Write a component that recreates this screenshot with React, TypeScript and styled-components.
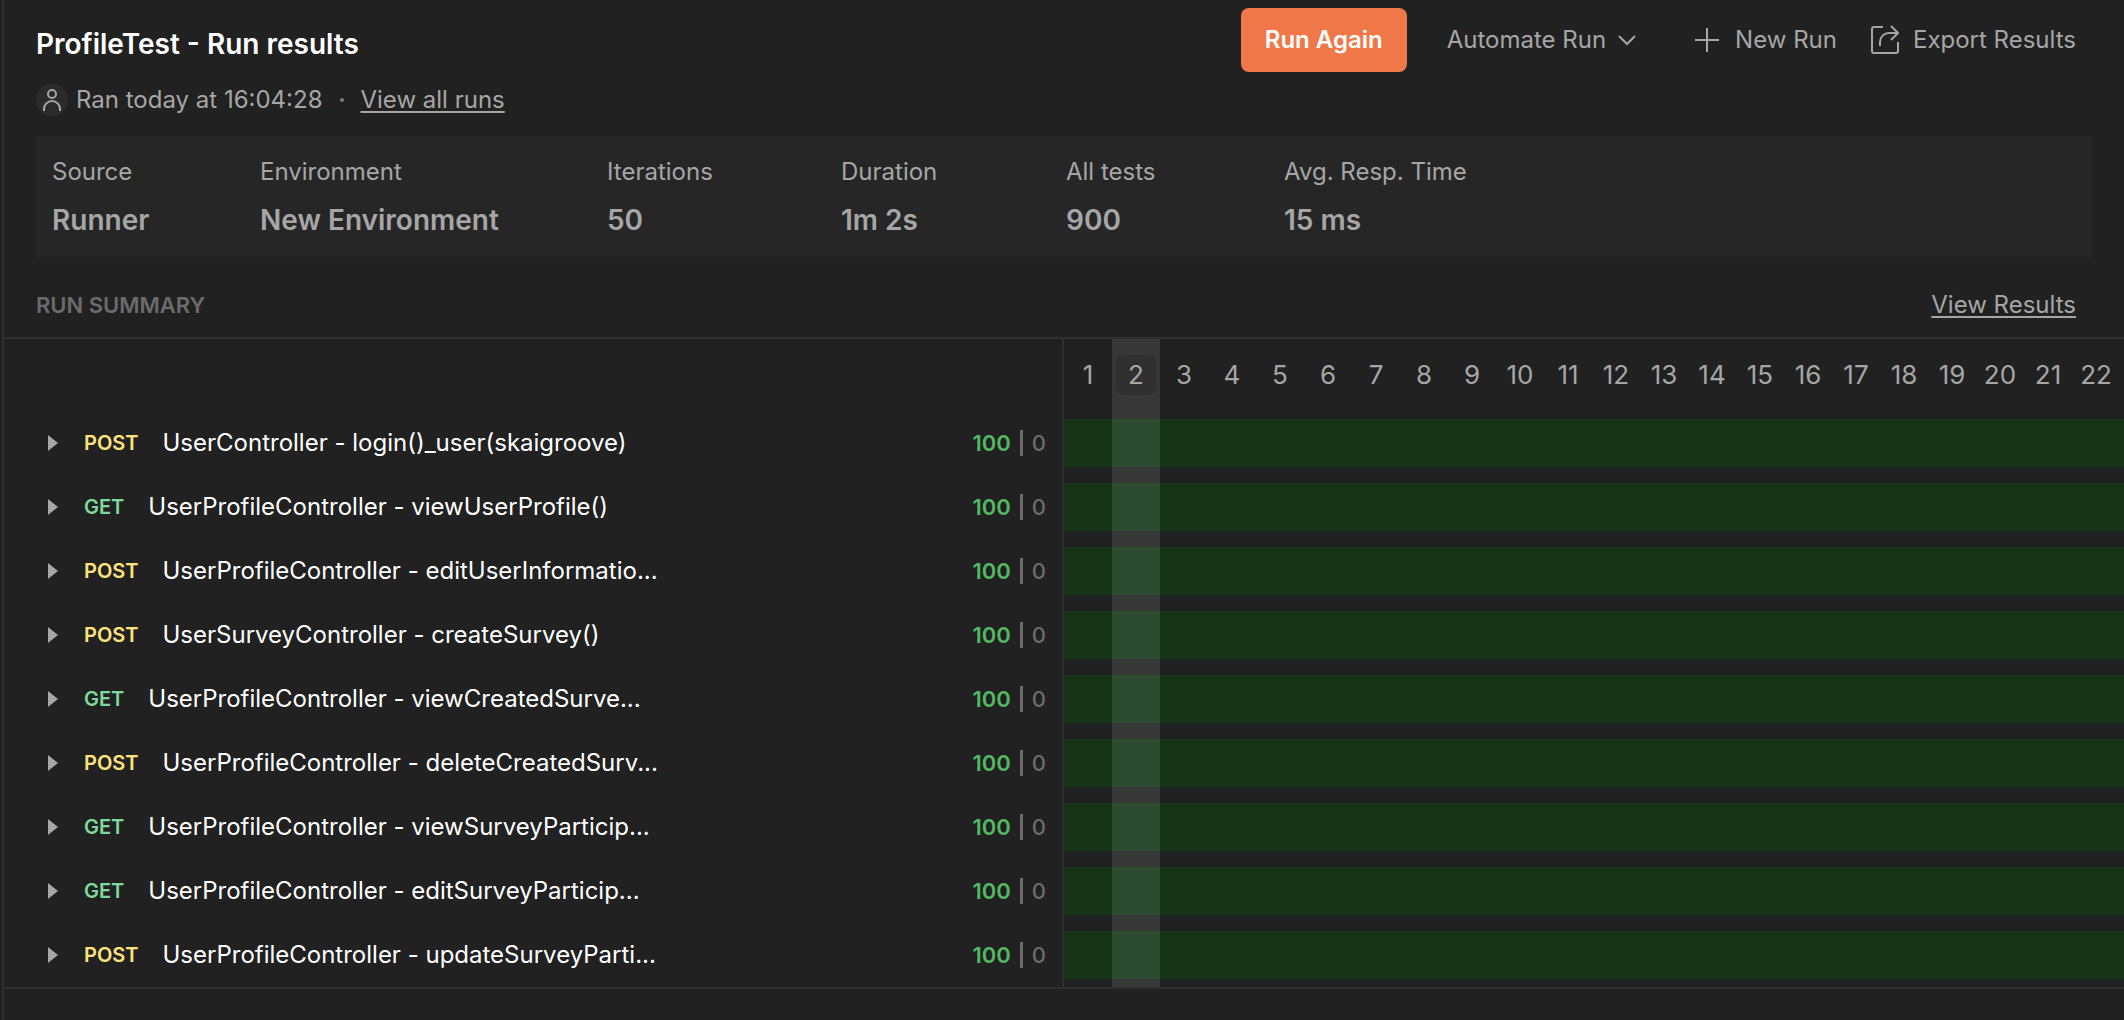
import React, { useState } from "react";
import styled, { createGlobalStyle } from "styled-components";

const font = `Inter, "Liberation Sans", sans-serif`;

const GlobalStyle = createGlobalStyle`
  *, *::before, *::after { box-sizing: border-box; }
  html, body, #root { min-height: 100%; }
  body {
    margin: 0;
    background: #212121;
    color: #a6a6a6;
    font-family: ${font};
    font-size: 24px;
    line-height: 32px;
    overflow-x: hidden;
  }
  button { font: inherit; color: inherit; background: none; border: 0; padding: 0; cursor: pointer; }
  a { color: inherit; }
  h1, h2, dl, dd, ol, ul { margin: 0; padding: 0; }
`;

const Page = styled.main`
  min-height: 100vh;
  margin-left: 2px;
  border-left: 2px solid #2f2f2f;
  overflow: hidden;
`;

const Header = styled.header`
  display: flex;
  justify-content: space-between;
  align-items: flex-start;
  padding: 8px 48px 0 32px;
`;

const Heading = styled.div`
  display: flex;
  flex-direction: column;
  gap: 20px;
  padding-top: 20px;
`;

const Title = styled.h1`
  font-size: 28px;
  font-weight: 600;
  line-height: 32px;
  color: #ffffff;
`;

const Meta = styled.div`
  display: flex;
  align-items: center;
  gap: 8px;
  height: 40px;
`;

const Avatar = styled.span`
  display: grid;
  place-items: center;
  width: 32px;
  height: 32px;
  border-radius: 50%;
  background: #2b2b2b;
`;

const Dot = styled.span`
  width: 4px;
  height: 4px;
  margin: 0 8px 0 10px;
  border-radius: 50%;
  background: #7a7a7a;
`;

const TextLink = styled.a`
  text-decoration: underline;
  text-decoration-thickness: 2px;
  text-underline-offset: 3px;
`;

const Actions = styled.div`
  display: flex;
  align-items: center;
`;

const PrimaryButton = styled.button`
  height: 64px;
  padding: 0 24px;
  border-radius: 8px;
  background: #f07748;
  color: #ffffff;
  font-weight: 600;
`;

const GhostButton = styled.button<{ $gap: number; $before: number }>`
  display: flex;
  align-items: center;
  gap: ${(p) => p.$gap}px;
  height: 64px;
  margin-left: ${(p) => p.$before}px;
`;

const Stats = styled.dl`
  display: flex;
  margin: 16px 32px 0;
  padding: 20px 16px 17px;
  background: #262626;
`;

const Stat = styled.div<{ $width: number }>`
  flex: 0 1 ${(p) => p.$width}px;
  white-space: nowrap;
  dt { line-height: 32px; }
  dd { margin-top: 12px; font-size: 28px; font-weight: 600; line-height: 40px; }
`;

const SummaryBar = styled.div`
  display: flex;
  justify-content: space-between;
  align-items: center;
  height: 80px;
  padding: 16px 48px 0 32px;
`;

const SummaryTitle = styled.h2`
  font-size: 22px;
  font-weight: 600;
  color: #6b6b6b;
`;

const Summary = styled.section`
  display: grid;
  grid-template-columns: 1060px minmax(0, 1fr);
  border-top: 2px solid #2f2f2f;
  border-bottom: 2px solid #2f2f2f;
`;

const Requests = styled.ul`
  list-style: none;
  padding-top: 72px;
  border-right: 2px solid #2f2f2f;
`;

const Request = styled.li`
  display: flex;
  align-items: center;
  height: 64px;
  padding: 0 16px 0 44px;
`;

const Toggle = styled.button`
  display: flex;
  align-items: center;
  width: 36px;
  height: 32px;
`;

const Method = styled.span<{ $get: boolean }>`
  margin-right: 24px;
  font-size: 20px;
  font-weight: 600;
  color: ${(p) => (p.$get ? "#7fd99a" : "#ffe47e")};
`;

const Name = styled.span`
  flex: 1;
  color: #ffffff;
  white-space: nowrap;
`;

const Counts = styled.span`
  display: flex;
  align-items: center;
  gap: 9px;
  font-size: 22px;
  font-weight: 500;
  color: #6b6b6b;
  b { color: #53b860; font-weight: 600; }
`;

const Divider = styled.i`
  width: 3px;
  height: 26px;
  background: #6b6b6b;
`;

const Iterations = styled.ol`
  display: flex;
  list-style: none;
  overflow: hidden;
`;

const Iteration = styled.li<{ $on: boolean }>`
  flex: 0 0 48px;
  background: ${(p) => (p.$on ? "#373737" : "transparent")};
`;

const Remainder = styled.li`
  flex: 1;
  padding-top: 80px;
`;

const IterationButton = styled.button<{ $on: boolean }>`
  display: block;
  width: 40px;
  height: 40px;
  margin: 16px auto 24px;
  border-radius: 8px;
  background: ${(p) => (p.$on ? "#303030" : "transparent")};
  font-size: 26px;
  text-align: center;
  white-space: nowrap;
`;

const Cell = styled.div<{ $on: boolean }>`
  height: 48px;
  margin-bottom: 16px;
  background: ${(p) => (p.$on ? "#2c4a30" : "#173419")};
  &:last-child { margin-bottom: 8px; }
`;

const stats: [string, string, number][] = [
  ["Source", "Runner", 208],
  ["Environment", "New Environment", 347],
  ["Iterations", "50", 234],
  ["Duration", "1m 2s", 225],
  ["All tests", "900", 218],
  ["Avg. Resp. Time", "15 ms", 200],
];

const requests: [string, string][] = [
  ["POST", "UserController - login()_user(skaigroove)"],
  ["GET", "UserProfileController - viewUserProfile()"],
  ["POST", "UserProfileController - editUserInformatio..."],
  ["POST", "UserSurveyController - createSurvey()"],
  ["GET", "UserProfileController - viewCreatedSurve..."],
  ["POST", "UserProfileController - deleteCreatedSurv..."],
  ["GET", "UserProfileController - viewSurveyParticip..."],
  ["GET", "UserProfileController - editSurveyParticip..."],
  ["POST", "UserProfileController - updateSurveyParti..."],
];

const iterations = Array.from({ length: 22 }, (_, i) => i + 1);

const stroke = { fill: "none", stroke: "currentColor", strokeWidth: 2 };

export default function App() {
  const [active, setActive] = useState(2);
  return (
    <>
      <GlobalStyle />
      <Page>
        <Header>
          <Heading>
            <Title>ProfileTest - Run results</Title>
            <Meta>
              <Avatar>
                <svg width="20" height="24" viewBox="0 0 20 24" {...stroke}>
                  <circle cx="10" cy="6" r="4" />
                  <path d="M2 23v-2a8 8 0 0 1 16 0v2" />
                </svg>
              </Avatar>
              <span>Ran today at 16:04:28</span>
              <Dot />
              <TextLink href="#runs">View all runs</TextLink>
            </Meta>
          </Heading>
          <Actions>
            <PrimaryButton>Run Again</PrimaryButton>
            <GhostButton $gap={12} $before={40}>
              Automate Run
              <svg width="18" height="12" viewBox="0 0 18 12" {...stroke}>
                <path d="M1 2l8 8 8-8" />
              </svg>
            </GhostButton>
            <GhostButton $gap={16} $before={59}>
              <svg width="24" height="24" viewBox="0 0 24 24" {...stroke}>
                <path d="M12 0v24M0 12h24" />
              </svg>
              New Run
            </GhostButton>
            <GhostButton $gap={14} $before={34}>
              <svg width="28" height="30" viewBox="0 0 28 30" {...stroke}>
                <path d="M12 2H3a2 2 0 0 0-2 2v22a2 2 0 0 0 2 2h22a2 2 0 0 0 2-2v-9" />
                <path d="M9 21v-4a9 9 0 0 1 9-9h9M20 1l7 7-7 7" />
              </svg>
              Export Results
            </GhostButton>
          </Actions>
        </Header>
        <Stats>
          {stats.map(([label, value, width]) => (
            <Stat key={label} $width={width}>
              <dt>{label}</dt>
              <dd>{value}</dd>
            </Stat>
          ))}
        </Stats>
        <SummaryBar>
          <SummaryTitle>RUN SUMMARY</SummaryTitle>
          <TextLink href="#results">View Results</TextLink>
        </SummaryBar>
        <Summary>
          <Requests>
            {requests.map(([method, name]) => (
              <Request key={name}>
                <Toggle aria-label={`Expand ${name}`}>
                  <svg width="10" height="16" viewBox="0 0 10 16" fill="currentColor">
                    <path d="M0 0l10 8-10 8z" />
                  </svg>
                </Toggle>
                <Method $get={method === "GET"}>{method}</Method>
                <Name>{name}</Name>
                <Counts>
                  <b>100</b>
                  <Divider />
                  <span>0</span>
                </Counts>
              </Request>
            ))}
          </Requests>
          <Iterations>
            {iterations.map((n) => (
              <Iteration key={n} $on={n === active}>
                <IterationButton $on={n === active} onClick={() => setActive(n)}>
                  {n}
                </IterationButton>
                {requests.map(([, name]) => (
                  <Cell key={name} $on={n === active} />
                ))}
              </Iteration>
            ))}
            <Remainder aria-hidden="true">
              {requests.map(([, name]) => (
                <Cell key={name} $on={false} />
              ))}
            </Remainder>
          </Iterations>
        </Summary>
      </Page>
    </>
  );
}
